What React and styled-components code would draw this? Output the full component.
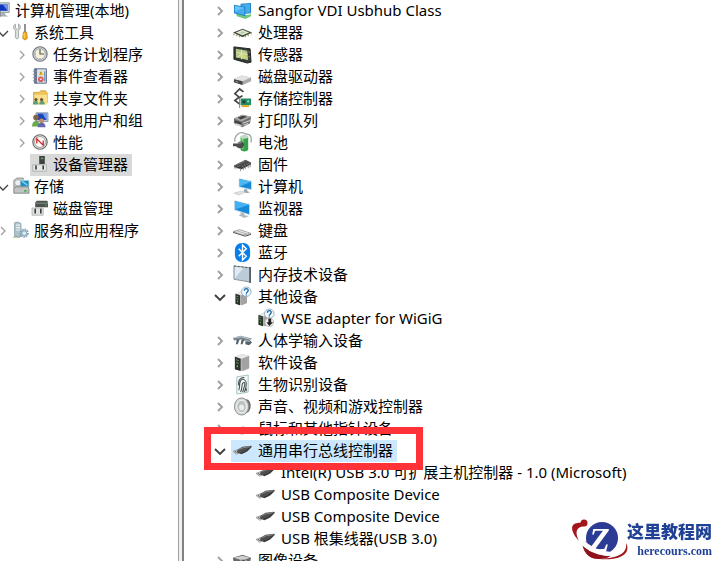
import React, { useState } from 'react';
import styled, { createGlobalStyle } from 'styled-components';

const GlobalStyle = createGlobalStyle`
  * {
    box-sizing: border-box;
  }

  body {
    margin: 0;
    background: #fff;
    color: #000;
    font-family: "Noto Sans", "Noto Sans CJK SC", sans-serif;
    font-size: 15px;
  }
`;

const Window = styled.div`
  display: flex;
  height: 100vh;
  overflow: hidden;
  background: #fff;
`;

const Sidebar = styled.nav`
  flex: 0 0 178px;
  overflow: hidden;
`;

const Splitter = styled.div`
  flex: 0 0 6px;
  background: #f0f0f0;
  border-left: 1px solid #a0a0a0;
  border-right: 2px solid #828282;
`;

const DevicePane = styled.main`
  flex: 1;
  min-width: 0;
  overflow: hidden;
  padding-left: 28px;
`;

const Tree = styled.ul`
  list-style: none;
  margin: 0;
  padding: 0;
`;

/* The console tree is scrolled sideways, so its root starts off screen */
const ConsoleTree = styled(Tree)`
  margin-left: -25px;
`;

const Branch = styled(Tree)`
  padding-left: ${({ $indent }) => $indent}px;
`;

const Row = styled.div`
  position: relative;
  display: flex;
  align-items: center;
  height: 22px;
  white-space: nowrap;
`;

const Toggle = styled.button`
  display: flex;
  align-items: center;
  justify-content: center;
  width: ${({ $compact }) => ($compact ? 17 : 16)}px;
  height: 22px;
  margin-right: ${({ $compact }) => ($compact ? 0 : 3)}px;
  padding: 0;
  border: none;
  background: none;
  color: ${({ $open }) => ($open ? '#404040' : '#a0a0a0')};
  visibility: ${({ $leaf }) => ($leaf ? 'hidden' : 'visible')};
`;

const Item = styled.span`
  display: flex;
  align-items: center;
  gap: ${({ $compact }) => ($compact ? 5 : 6)}px;
  height: 22px;
  padding: 0 4px 2px 2px;
  line-height: 20px;
  background: ${({ $highlight }) => $highlight || 'transparent'};
`;

const Icon = styled.svg`
  flex: none;
  width: ${({ $size }) => $size}px;
  height: ${({ $size }) => $size}px;
  overflow: visible;
`;

const Marker = styled.span`
  position: absolute;
  z-index: 1;
  top: -13px;
  left: -8px;
  width: 219px;
  height: 43px;
  border: 7px solid #ff3337;
  pointer-events: none;
`;

const Brand = styled.a`
  position: fixed;
  right: 5px;
  bottom: 0;
  display: flex;
  align-items: center;
  color: #1f4196;
  text-decoration: none;

  svg {
    width: 60px;
    height: 43px;
    overflow: visible;
  }
`;

const BrandText = styled.span`
  display: flex;
  flex-direction: column;
  align-items: flex-end;
  gap: 2px;
  margin-left: -4px;
`;

const BrandName = styled.span`
  font: 900 17px/20px "Noto Sans CJK SC", sans-serif;
`;

const BrandDomain = styled.span`
  font: bold 12px/16px "Liberation Serif", serif;
`;

const usb = (
  <>
    <path d="M0 11l5-2 4 2-5 3z" fill="#d2d2d2" stroke="#808080" strokeWidth=".7" />
    <path d="M2 11l2 1" stroke="#555" />
    <path d="M5 9l5-3 9-1 1 1-5 5-6 3-5-2z" fill="#4f4f4f" />
    <path d="M6 9l5-2 7-1" stroke="#8b8b8b" fill="none" />
    <path d="M8 13l5-2 5-4" stroke="#2c2c2c" fill="none" />
  </>
);

const tower = (
  <>
    <path d="M2 4l7-3 8 2v13l-7 3-8-2z" fill="#b6b6b6" />
    <path d="M9 6l8-3v13l-7 3z" fill="#a2a2a2" />
    <path d="M2 4l7 2 8-3-8-2z" fill="#e8e8e8" />
    <path d="M2 4l6 2v13l-6-2z" fill="#293229" />
    <path d="M3 7l3 1M3 10l3 1" stroke="#6c9a6b" />
    <path d="M4 13h1v2H4z" fill="#6dea5e" />
  </>
);

const question = (
  <>
    <circle cx="14" cy="5" r="5" fill="#f6fbff" stroke="#8aabc2" />
    <path d="M12 4c0-3 4-3 4 0 0 1-2 1-2 3M14 8v1" fill="none" stroke="#1767a8" strokeWidth="1.4" />
  </>
);

const icons = {
  computer: (
    <>
      <path d="M3 1h16v12H3z" fill="#d3dbe4" stroke="#7c8791" />
      <path d="M5 3h12v8H5z" fill="#1236bb" />
      <path d="M11 3h6v8z" fill="#6f95e9" />
      <path d="M9 13h5v3l4 2H6l3-2z" fill="#a7afb8" />
      <path d="M1 12h7v6H1z" fill="#bdc5cb" stroke="#6d7479" />
    </>
  ),
  tools: (
    <>
      <path d="M3 0v5l2 2 2-2V0c3 2 3 6 0 8v9c-1 2-3 2-4 0V8c-3-2-3-6 0-8z" fill="#dcdede" stroke="#7f8586" strokeWidth=".8" />
      <path d="M14 0h2v10h-2z" fill="#777" />
      <path d="M13 10h4l1 8-3 2-3-2z" fill="#f4ad18" stroke="#b4770d" strokeWidth=".8" />
      <path d="M14 11v6" stroke="#ffe18a" />
    </>
  ),
  clock: (
    <>
      <circle cx="10" cy="10" r="9" fill="#c9ccd0" stroke="#72787e" strokeWidth="1.3" />
      <circle cx="10" cy="10" r="6.6" fill="#f7f0da" stroke="#9ba3aa" />
      <path d="M10 4v6h5" fill="none" stroke="#555" strokeWidth="1.5" />
      <path d="M4 10h1M10 15v1" stroke="#777" />
    </>
  ),
  events: (
    <>
      <path d="M3 1h15v18H3z" fill="#d8e2ef" stroke="#596c87" strokeWidth="1.2" />
      <path d="M5 1v18" stroke="#4c5c7b" strokeWidth="2" />
      <path d="M1 4h5M1 8h5M1 12h5M1 16h5" stroke="#858d99" />
      <path d="M11 3l4 6H8z" fill="#f3cc30" />
      <circle cx="11" cy="14" r="3.500" fill="#d85c53" />
      <path d="M11 5v3" stroke="#85641f" />
      <path d="M10 13l2 2M12 13l-2 2" stroke="#fff" />
      <path d="M16 4v13" stroke="#6987bd" strokeWidth="1.5" />
    </>
  ),
  shared: (
    <>
      <path d="M2 3h7l2-2h6l2 3v12H2z" fill="#efc55a" stroke="#c79a35" />
      <path d="M3 6h16v12H3z" fill="#f9de8b" />
      <path d="M1 18c0-6 7-6 7 0zM9 18c0-6 7-6 7 0z" fill="#5da076" />
      <circle cx="5" cy="12" r="2" fill="#675039" />
      <circle cx="12" cy="12" r="2" fill="#675039" />
    </>
  ),
  users: (
    <>
      <path d="M5 1h15v11H5z" fill="#b8c6d6" stroke="#7c8da1" />
      <path d="M7 2h11v8H7z" fill="#1745bd" />
      <path d="M13 2h5v8z" fill="#75a0ef" />
      <circle cx="5" cy="7" r="3.5" fill="#806347" />
      <path d="M0 18c0-9 10-9 10 0z" fill="#68a94c" />
      <circle cx="12" cy="11" r="3" fill="#c78d60" />
      <path d="M7 19c0-8 10-8 10 0z" fill="#6665b0" />
    </>
  ),
  performance: (
    <>
      <circle cx="10" cy="10" r="9" fill="#e8e9e9" stroke="#626767" strokeWidth="1.4" />
      <circle cx="10" cy="10" r="6.8" fill="#fff" stroke="#8e8583" />
      <path d="M6 12V6l8 8V8" fill="none" stroke="#cf2525" strokeWidth="1.6" />
    </>
  ),
  deviceManager: (
    <>
      <path d="M9 0h7v10H9z" fill="#3d4241" />
      <path d="M11 2h3v2h-3z" fill="#66a66d" />
      <path d="M1 11h17v8H1z" fill="#e6e8e7" stroke="#a3a8a6" />
      <path d="M4 12h2v5H4zM13 12h2v5h-2z" fill="#333938" />
    </>
  ),
  storage: (
    <>
      <path d="M1 3l4-3h8l-2 12H1z" fill="#c4c9c7" stroke="#858b8a" />
      <circle cx="6" cy="6" r="4" fill="#eef0ef" stroke="#989f9c" />
      <path d="M9 3h11v8H9z" fill="#218bc1" stroke="#b3d7df" />
      <path d="M11 4l7 5" stroke="#77d2ec" strokeWidth="2" />
      <path d="M1 13l3-2h15l1 3v5H1z" fill="#c0c5c1" stroke="#727875" />
      <path d="M14 15h3v2h-3z" fill="#3aa745" />
    </>
  ),
  disk: (
    <>
      <path d="M4 3l2-2h13l1 2v6H4z" fill="#4b5350" />
      <path d="M4 4h16" stroke="#9aa29d" />
      <path d="M16 6h3v1h-3z" fill="#42b34c" />
      <path d="M0 10h14v9H0z" fill="#e1e3e2" stroke="#a9adab" />
      <path d="M3 11h2v6H3zM10 11h2v6h-2z" fill="#373c3a" />
    </>
  ),
  services: (
    <>
      <path d="M2 1l4-1 4 2v16H2z" fill="#aec2cc" stroke="#849aa6" />
      <path d="M4 4h5M4 7h5M4 10h5" stroke="#edf4f7" strokeWidth="1.5" />
      <circle cx="14" cy="14" r="4.500" fill="none" stroke="#7fa2b6" strokeWidth="2.5" strokeDasharray="2 1" />
      <circle cx="14" cy="14" r="3" fill="#dcebf0" stroke="#7095ac" />
      <path d="M0 19h9" stroke="#8ca66b" />
    </>
  ),
  hub: (
    <>
      <path d="M3 12l9 3 7-1v2l-6 3-9-3z" fill="#6fc87a" />
      <path d="M8 3l11-1v11l-11 1z" fill="#1f80c8" />
      <path d="M9 4l9-1v9l-9 1z" fill="#48aeea" />
      <path d="M1 4l12 2v10L1 13z" fill="#1f80c8" />
      <path d="M2 5l10 2v8L2 12z" fill="#45adf0" />
      <path d="M2 5l10 2-10 4z" fill="#68c3fa" />
    </>
  ),
  cpu: (
    <>
      <path d="M0 10l10-4 10 4-10 5z" fill="#43503f" />
      <path d="M3 10l7-3 7 3-7 3z" fill="#dfe8cf" />
      <path d="M7 10l3-1 3 1-3 1z" fill="#b7c3a6" />
      <path d="M1 11v2M4 12v2M7 13v2M13 13v2M16 12v2M19 10v2" stroke="#8d8044" />
    </>
  ),
  sensor: (
    <>
      <path d="M1 2l17 2 1 14-4 1L1 15z" fill="#343a36" stroke="#1e211e" />
      <path d="M3 4l12 2 1 10-13-3z" fill="#b5c788" />
      <path d="M4 8l11 2M9 5v10M4 13l8-5" stroke="#e3ebc3" />
      <path d="M10 8l5 6h-6z" fill="#d5d675" />
      <path d="M17 7v1M17 12v1" stroke="#cdd2cf" />
    </>
  ),
  drive: (
    <>
      <path d="M1 13l8-4 10 2v4l-9 4-9-3z" fill="#a8a8a8" />
      <path d="M1 13l8-4 10 2-9 4z" fill="#e2e2e2" />
      <path d="M1 13l9 2v4l-9-3z" fill="#464646" />
      <path d="M3 15l2 1" stroke="#91c789" />
    </>
  ),
  controller: (
    <>
      <path d="M11 3L7 0 2 5l5 4 3-2M6 9l-4 3 5 4" fill="none" stroke="#454545" strokeWidth="1.8" />
      <path d="M8 10h11v7H8z" fill="#218e5f" />
      <path d="M10 12h3v3h-3z" fill="#283c3c" />
      <path d="M15 12h2v2h-2z" fill="#8de3e0" />
      <path d="M9 17h8v2H9z" fill="#dba726" />
      <path d="M7 9v11" stroke="#777" />
    </>
  ),
  printer: (
    <>
      <path d="M1 8l9-4 9 2-1 7-8 4-9-4z" fill="#707070" />
      <path d="M1 8l9-4 9 2-10 5z" fill="#a7a7a7" />
      <path d="M5 7l5-2 5 1-7 3z" fill="#424242" />
      <path d="M2 10l7 2v3l-7-3z" fill="#404040" />
      <path d="M10 13l8-3M11 15l5-2" stroke="#ddd" />
      <path d="M3 13l7 2-3 1-5-1z" fill="#d6d6d6" />
    </>
  ),
  battery: (
    <>
      <path d="M2 9C1 3 7-3 13 1c6 0 7 4 6 9" fill="none" stroke="#9a9fa0" strokeWidth="1.3" />
      <path d="M8 4c2-2 6-2 8 0v14c-2 2-6 2-8 0z" fill="#35a14b" />
      <path d="M10 5v12" stroke="#8bdc83" strokeWidth="2" />
      <ellipse cx="12" cy="4" rx="4" ry="2" fill="#c3d9c6" />
      <path d="M0 11h4l3-2h3l2 3-2 4H6l-3-2H0z" fill="#4b4d49" />
      <path d="M4 11l5-1" stroke="#a8aaa4" />
    </>
  ),
  firmware: (
    <>
      <path d="M1 11l12-6 6 3-10 5z" fill="#4d4d4d" />
      <path d="M1 11l8 2 10-5v2L9 15l-8-2z" fill="#303030" />
      <path d="M8 14v3M11 13v3M13 12v3M16 10v4M18 9v4" stroke="#8e8e8e" />
      <path d="M2 12v3M4 13v2" stroke="#b5b5b5" />
      <path d="M4 10l9-4" stroke="#858585" />
    </>
  ),
  pc: (
    <>
      <path d="M6 1l14 3v10L6 11z" fill="#d0e2ea" />
      <path d="M7 2l12 3v8L7 10z" fill="#1689d8" />
      <path d="M7 2l12 3-12 5z" fill="#4cb7f3" />
      <path d="M12 13h3v2l3 1-4 1-3-2z" fill="#96a3aa" />
      <path d="M1 17l7-2 5 1-7 3z" fill="#e0e3e5" stroke="#aeb3b6" strokeWidth=".5" />
    </>
  ),
  monitor: (
    <>
      <path d="M1 1l17 4v12L1 12z" fill="#d9e6ed" />
      <path d="M2 2l15 4v10L2 11z" fill="#1689d8" />
      <path d="M2 2l15 4-15 5z" fill="#43b2f4" />
      <path d="M8 14l4 1v2l5 1-5 2-6-3 2-1z" fill="#aebac0" />
    </>
  ),
  keyboard: (
    <>
      <path d="M0 11l7-2 12 4-6 2z" fill="#b3b3b3" stroke="#888" strokeWidth=".5" />
      <path d="M3 11l9 3M6 10l10 3" stroke="#eee" />
      <path d="M0 12l13 4 6-2" stroke="#4e4e4e" fill="none" />
    </>
  ),
  bluetooth: (
    <>
      <rect x="2" y="0" width="16" height="20" rx="7" fill="#087ee8" />
      <path d="M6 6l8 8-4 4V2l4 4-8 8" fill="none" stroke="#fff" strokeWidth="1.5" />
    </>
  ),
  memory: (
    <>
      <path d="M1 1l17 2v15L1 15z" fill="#bdcbd6" stroke="#87939c" />
      <path d="M2 2l9 1L2 14z" fill="#e2ebf1" />
      <path d="M18 2v17" stroke="#41484e" strokeWidth="1.5" />
      <path d="M1 1l17 2" stroke="#4c555b" strokeDasharray="2 2" />
    </>
  ),
  unknown: (
    <>
      <g transform="translate(1 4) scale(.8)">{tower}</g>
      {question}
    </>
  ),
  adapter: (
    <>
      <g transform="translate(1 3) scale(.8)">{tower}</g>
      {question}
      <circle cx="14" cy="14" r="4.500" fill="#f2f2f2" stroke="#b7b7b7" />
      <path d="M13 10h3v4h2l-4 4-3-4h2z" fill="#222" />
    </>
  ),
  input: (
    <>
      <path d="M0 7l8-2 12 3-4 4-7-3-8 1z" fill="#7a8790" />
      <path d="M1 7l8-1 10 3" stroke="#c8d3da" fill="none" />
      <path d="M4 9h3l-2 5H3zM9 9h3l-2 5H8zM13 11l5-1 2 2-3 3-4-1z" fill="#56616a" />
      <path d="M12 10l6 1" stroke="#b1bec6" />
    </>
  ),
  software: tower,
  biometric: (
    <>
      <path d="M4 2l12-2v18L4 20z" fill="#f2f7f7" stroke="#a3bfc0" />
      <path d="M6 16c2-4 0-7 2-10 2-3 6-1 6 3 0 4-1 6-2 9M8 18c2-4 1-7 2-9 2-3 3 0 2 3-1 3-1 4-2 6M6 11c-1-6 3-9 6-8M14 14v3" fill="none" stroke="#4a5251" strokeWidth="1.1" />
    </>
  ),
  audio: (
    <>
      <path d="M8 1l8 2c4 4 3 10 0 13l-7 3z" fill="#6b7071" />
      <ellipse cx="9" cy="10" rx="7.500" ry="9" fill="#d7d9d9" stroke="#888d8e" />
      <ellipse cx="9" cy="10" rx="5" ry="6.500" fill="#bcc1c2" stroke="#f2f2f2" />
      <ellipse cx="9" cy="11" rx="2.500" ry="3" fill="#eceeee" />
    </>
  ),
  mouse: (
    <path d="M4 11c2-3 8-4 11-1l2 3c-3 4-9 4-14 1z" fill="#555" />
  ),
  usb,
  imaging: (
    <>
      <path d="M0 7l10-3 9 3-2 9-7 3-9-3z" fill="#696969" />
      <path d="M1 7l9-2 8 2-8 3z" fill="#d0d0d0" />
      <circle cx="11" cy="13" r="4" fill="#3d3d3d" stroke="#bbb" />
    </>
  ),
};

const consoleTree = [
  {
    label: '计算机管理(本地)',
    icon: 'computer',
    children: [
      {
        label: '系统工具',
        icon: 'tools',
        children: [
          { label: '任务计划程序', icon: 'clock', collapsed: true },
          { label: '事件查看器', icon: 'events', collapsed: true },
          { label: '共享文件夹', icon: 'shared', collapsed: true },
          { label: '本地用户和组', icon: 'users', collapsed: true },
          { label: '性能', icon: 'performance', collapsed: true },
          { label: '设备管理器', icon: 'deviceManager', highlight: '#d9d9d9' },
        ],
      },
      {
        label: '存储',
        icon: 'storage',
        children: [{ label: '磁盘管理', icon: 'disk' }],
      },
      { label: '服务和应用程序', icon: 'services', collapsed: true },
    ],
  },
];

const deviceTree = [
  { label: 'Sangfor VDI Usbhub Class', icon: 'hub', collapsed: true },
  { label: '处理器', icon: 'cpu', collapsed: true },
  { label: '传感器', icon: 'sensor', collapsed: true },
  { label: '磁盘驱动器', icon: 'drive', collapsed: true },
  { label: '存储控制器', icon: 'controller', collapsed: true },
  { label: '打印队列', icon: 'printer', collapsed: true },
  { label: '电池', icon: 'battery', collapsed: true },
  { label: '固件', icon: 'firmware', collapsed: true },
  { label: '计算机', icon: 'pc', collapsed: true },
  { label: '监视器', icon: 'monitor', collapsed: true },
  { label: '键盘', icon: 'keyboard', collapsed: true },
  { label: '蓝牙', icon: 'bluetooth', collapsed: true },
  { label: '内存技术设备', icon: 'memory', collapsed: true },
  {
    label: '其他设备',
    icon: 'unknown',
    children: [{ label: 'WSE adapter for WiGiG', icon: 'adapter' }],
  },
  { label: '人体学输入设备', icon: 'input', collapsed: true },
  { label: '软件设备', icon: 'software', collapsed: true },
  { label: '生物识别设备', icon: 'biometric', collapsed: true },
  { label: '声音、视频和游戏控制器', icon: 'audio', collapsed: true },
  { label: '鼠标和其他指针设备', icon: 'mouse', collapsed: true },
  {
    label: '通用串行总线控制器',
    icon: 'usb',
    highlight: '#cce8ff',
    marked: true,
    children: [
      { label: 'Intel(R) USB 3.0 可扩展主机控制器 - 1.0 (Microsoft)', icon: 'usb' },
      { label: 'USB Composite Device', icon: 'usb' },
      { label: 'USB Composite Device', icon: 'usb' },
      { label: 'USB 根集线器(USB 3.0)', icon: 'usb' },
    ],
  },
  { label: '图像设备', icon: 'imaging', collapsed: true },
];

const Chevron = ({ open, compact }) => (
  <svg width="12" height="12" viewBox="0 0 12 12" fill="none" stroke="currentColor" strokeWidth={compact ? 1.3 : 1.9} aria-hidden="true">
    <path d={open ? 'M1 4l5 5 5-5' : 'M4 2l4 4-4 4'} />
  </svg>
);

const TreeNode = ({ node, compact }) => {
  const [open, setOpen] = useState(!node.collapsed);
  const leaf = !node.children && !node.collapsed;

  return (
    <li>
      <Row>
        <Toggle
          type="button"
          aria-label={node.label}
          aria-expanded={open}
          $open={open}
          $leaf={leaf}
          $compact={compact}
          onClick={() => setOpen(!open)}
        >
          <Chevron open={open} compact={compact} />
        </Toggle>
        <Item $highlight={node.highlight} $compact={compact}>
          <Icon $size={compact ? 16 : 19} viewBox="0 0 20 20" aria-hidden="true">
            {icons[node.icon]}
          </Icon>
          {node.label}
        </Item>
        {node.marked && <Marker />}
      </Row>
      {open && node.children && (
        <Branch $indent={compact ? 19 : 23}>
          {node.children.map((child, index) => (
            <TreeNode key={index} node={child} compact={compact} />
          ))}
        </Branch>
      )}
    </li>
  );
};

const Logo = () => (
  <svg viewBox="0 0 60 43" aria-hidden="true">
    <path d="M11 22c0 12 7 20 18 19 6 0 12-3 14-6z" fill="#8f1218" />
    <circle cx="31" cy="20" r="16" fill="#2c3b94" />
    <path d="M7 10c3 16 23 27 43 23l-8 5C24 39 9 29 6 19z" fill="#fff" />
    <path d="M13 5C-3 3-1 13 8 23 3 13 6 9 14 8z" fill="#a3161b" />
    <circle cx="13" cy="5" r="3.500" fill="#a3161b" />
    <path d="M28 41c14-1 29-3 27-16 5 9-3 18-27 16z" fill="#a3161b" />
    <text x="18" y="33" fill="#fff" fontFamily="Liberation Serif, serif" fontSize="34" fontStyle="italic" fontWeight="bold">Z</text>
  </svg>
);

const App = () => (
  <>
    <GlobalStyle />
    <Window>
      <Sidebar>
        <ConsoleTree>
          {consoleTree.map((node) => (
            <TreeNode key={node.label} node={node} compact />
          ))}
        </ConsoleTree>
      </Sidebar>
      <Splitter />
      <DevicePane>
        <Tree>
          {deviceTree.map((node) => (
            <TreeNode key={node.label} node={node} />
          ))}
        </Tree>
      </DevicePane>
    </Window>
    <Brand href="#">
      <Logo />
      <BrandText>
        <BrandName>这里教程网</BrandName>
        <BrandDomain>herecours.com</BrandDomain>
      </BrandText>
    </Brand>
  </>
);

export default App;
